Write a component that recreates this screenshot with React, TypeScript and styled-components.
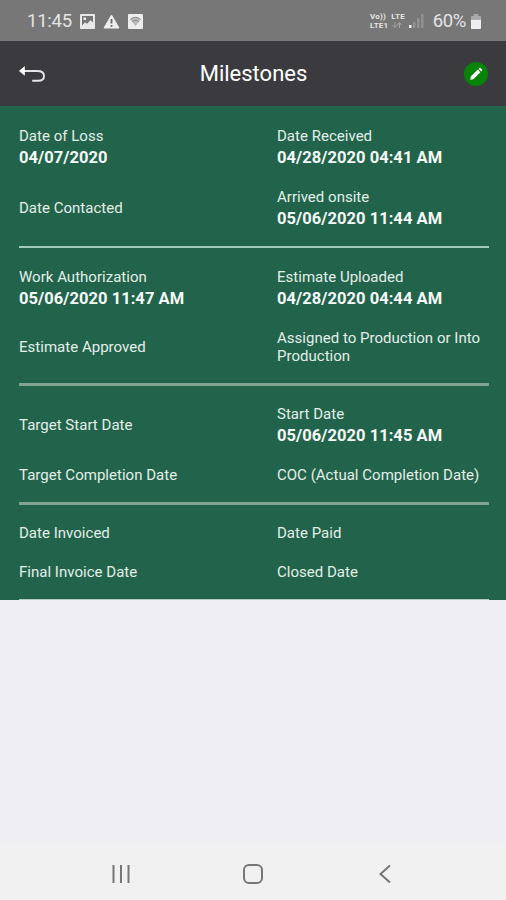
import React from "react";
import styled, { createGlobalStyle } from "styled-components";

const GlobalStyle = createGlobalStyle`
  *, *::before, *::after { box-sizing: border-box; }
  html, body { margin: 0; padding: 0; }
  body { font-family: Roboto, "Liberation Sans", sans-serif; background: #efeff4; }
`;

const Screen = styled.div`
  display: flex;
  flex-direction: column;
  width: 100%;
  height: 100vh;
  min-height: 900px;
  background: #efeef4;
`;

const StatusBar = styled.div`
  display: flex;
  align-items: center;
  justify-content: space-between;
  flex: none;
  height: 41px;
  padding: 1px 25px 0 27px;
  background: #777777;
  color: #e4e4e4;
`;

const StatusGroup = styled.div<{ $gap: number }>`
  display: flex;
  align-items: center;
  gap: ${(p) => p.$gap}px;
`;

const StatusText = styled.span<{ $spacing?: number }>`
  font-size: 18.5px;
  line-height: 24px;
  letter-spacing: ${(p) => p.$spacing ?? 0}px;
`;

const NetworkLabels = styled.div`
  display: flex;
  gap: 3px;
  margin-right: -1px;
`;

const NetworkLabel = styled.div`
  display: flex;
  flex-direction: column;
  font-size: 8px;
  font-weight: 700;
  line-height: 9px;
  letter-spacing: 0.2px;
`;

const SignalSlot = styled.div`
  display: flex;
  margin-right: 4px;
`;

const Header = styled.header`
  display: grid;
  grid-template-columns: 30px 1fr 30px;
  align-items: center;
  flex: none;
  height: 65px;
  padding: 0 15px 0 17px;
  background: #3b3b3f;
`;

const Title = styled.h1`
  margin: 0;
  padding-right: 1px;
  color: #fff;
  font-size: 22px;
  font-weight: 400;
  line-height: 28px;
  text-align: center;
`;

const IconButton = styled.button`
  display: flex;
  align-items: center;
  justify-content: center;
  width: 30px;
  height: 30px;
  padding: 0;
  border: 0;
  background: transparent;
`;

const Panel = styled.main`
  flex: none;
  height: 494px;
  padding: 21px 17px 0 19px;
  background: #22644b;
  overflow: hidden;
`;

const Section = styled.section<{ $line: string; $thickness: number }>`
  display: grid;
  row-gap: 21px;
  padding-bottom: 18px;
  margin-bottom: ${(p) => 22 - p.$thickness}px;
  border-bottom: ${(p) => p.$thickness}px solid ${(p) => p.$line};
`;

const Row = styled.div`
  display: grid;
  grid-template-columns: 258px 1fr;
  align-items: center;
`;

const Label = styled.div`
  color: #e3eee9;
  font-size: 15px;
  line-height: 18px;
  letter-spacing: 0.02px;
`;

const Value = styled.div`
  padding-top: 3px;
  color: #f6faf8;
  font-size: 16.5px;
  font-weight: 700;
  line-height: 19px;
  letter-spacing: 0.05px;
`;

const Filler = styled.div`
  flex: 1;
`;

const NavBar = styled.nav`
  display: flex;
  align-items: center;
  justify-content: space-between;
  flex: none;
  height: 57px;
  padding: 4px 106px 0;
  background: #f1f1f1;
`;

type Item = { label: string; value?: string };
type Group = { line: string; thickness: number; rows: [Item, Item][] };

const groups: Group[] = [
  {
    line: "#a2cab9",
    thickness: 2,
    rows: [
      [{ label: "Date of Loss", value: "04/07/2020" }, { label: "Date Received", value: "04/28/2020 04:41 AM" }],
      [{ label: "Date Contacted" }, { label: "Arrived onsite", value: "05/06/2020 11:44 AM" }],
    ],
  },
  {
    line: "#80a392",
    thickness: 3,
    rows: [
      [{ label: "Work Authorization", value: "05/06/2020 11:47 AM" }, { label: "Estimate Uploaded", value: "04/28/2020 04:44 AM" }],
      [{ label: "Estimate Approved" }, { label: "Assigned to Production or Into Production" }],
    ],
  },
  {
    line: "#80a392",
    thickness: 3,
    rows: [
      [{ label: "Target Start Date" }, { label: "Start Date", value: "05/06/2020 11:45 AM" }],
      [{ label: "Target Completion Date" }, { label: "COC (Actual Completion Date)" }],
    ],
  },
  {
    line: "#b4c8c0",
    thickness: 2,
    rows: [
      [{ label: "Date Invoiced" }, { label: "Date Paid" }],
      [{ label: "Final Invoice Date" }, { label: "Closed Date" }],
    ],
  },
];

const Milestone = ({ label, value }: Item) => (
  <div>
    <Label>{label}</Label>
    {value && <Value>{value}</Value>}
  </div>
);

const PictureIcon = () => (
  <svg width="15" height="15" viewBox="0 0 15 15">
    <path fill="#e9e9e9" fillRule="evenodd" d="M1 0h13a1 1 0 0 1 1 1v13a1 1 0 0 1-1 1H1a1 1 0 0 1-1-1V1a1 1 0 0 1 1-1zM2 2v9.500l3-3.300 2 1.600 3.500-3.600L13 8.500V2zM3.500 3.500h2.500v2.500H3.500z" />
  </svg>
);

const WarningIcon = () => (
  <svg width="17" height="15" viewBox="0 0 17 15">
    <path d="M8.500 1 16 14H1z" fill="#ededed" stroke="#ededed" strokeLinejoin="round" />
    <path d="M8.500 5v4.500M8.500 11v1.800" stroke="#666" strokeWidth="1.800" />
  </svg>
);

const WifiCardIcon = () => (
  <svg width="15" height="15" viewBox="0 0 16 15" preserveAspectRatio="none">
    <rect width="16" height="15" rx="1" fill="#ededed" />
    <path d="M2.500 5.500Q8 1 13.500 5.500L8 12z" fill="#bbb" />
    <path d="M2.500 5.500Q8 1 13.500 5.500M4.500 7.500Q8 5 11.500 7.500" fill="none" stroke="#888" />
  </svg>
);

const DataArrowsIcon = () => (
  <svg width="12" height="8" viewBox="0 0 12 8">
    <path d="M4 1v5M1.500 4 4 6.500 6.500 4M8.500 7V2M6.500 4l2-2.500 2 2.500" fill="none" stroke="#a6a6a6" />
  </svg>
);

const SignalIcon = () => (
  <svg width="15" height="14" viewBox="0 0 15 14">
    <rect x="0" y="11" width="2.500" height="3" fill="#eee" />
    <rect x="4" y="8" width="2.500" height="6" fill="#929292" />
    <rect x="8" y="4" width="2.500" height="10" fill="#929292" />
    <rect x="12" y="0" width="2.500" height="14" fill="#929292" />
  </svg>
);

const BatteryIcon = () => (
  <svg width="10" height="15" viewBox="0 0 11 16" preserveAspectRatio="none">
    <path d="M3 0h5v2h2a1 1 0 0 1 1 1v3H0V3a1 1 0 0 1 1-1h2z" fill="#aaa" />
    <path d="M0 6h11v9a1 1 0 0 1-1 1H1a1 1 0 0 1-1-1z" fill="#eee" />
  </svg>
);

const BackIcon = () => (
  <svg width="30" height="30" viewBox="0 0 30 30">
    <path d="M7 12h13.200c4.300 0 6.800 2 6.800 4.900s-2.300 4.800-5.800 4.800h-6" fill="none" stroke="#e6e6e6" strokeWidth="1.900" />
    <path d="M2 11.900 7.800 7v9.800z" fill="#fff" />
  </svg>
);

const EditIcon = () => (
  <svg width="26" height="26" viewBox="0 0 26 26">
    <circle cx="13" cy="13" r="12" fill="#078307" />
    <path d="M7.300 18.700 7.800 15.600 14.800 8.600l2.600 2.600-7 7z" fill="#fff" />
    <path d="m15.600 7.900.9-.9q.5-.4 1 0l1.500 1.500q.4.500 0 1l-.9.900z" fill="#fff" />
  </svg>
);

const RecentsIcon = () => (
  <svg width="30" height="24" viewBox="0 0 30 24">
    <path d="M7.500 3v18M15 3v18M22.500 3v18" stroke="#777" strokeWidth="2" />
  </svg>
);

const HomeIcon = () => (
  <svg width="30" height="24" viewBox="0 0 30 24">
    <rect x="6" y="3" width="18" height="18" rx="5" fill="none" stroke="#777" strokeWidth="2" />
  </svg>
);

const ChevronIcon = () => (
  <svg width="30" height="24" viewBox="0 0 30 24">
    <path d="m20 3.500-9.500 8.500 9.500 8.500" fill="none" stroke="#777" strokeWidth="2" />
  </svg>
);

export default function App() {
  return (
    <Screen>
      <GlobalStyle />
      <StatusBar>
        <StatusGroup $gap={8}>
          <StatusText $spacing={-0.25}>11:45</StatusText>
          <PictureIcon />
          <WarningIcon />
          <WifiCardIcon />
        </StatusGroup>
        <StatusGroup $gap={5}>
          <NetworkLabels>
            <NetworkLabel>
              <span>Vo))</span>
              <span>LTE1</span>
            </NetworkLabel>
            <NetworkLabel>
              <span>LTE</span>
              <DataArrowsIcon />
            </NetworkLabel>
          </NetworkLabels>
          <SignalSlot><SignalIcon /></SignalSlot>
          <StatusText $spacing={-0.4}>60%</StatusText>
          <BatteryIcon />
        </StatusGroup>
      </StatusBar>
      <Header>
        <IconButton aria-label="Back"><BackIcon /></IconButton>
        <Title>Milestones</Title>
        <IconButton aria-label="Edit"><EditIcon /></IconButton>
      </Header>
      <Panel>
        {groups.map((group, i) => (
          <Section key={i} $line={group.line} $thickness={group.thickness}>
            {group.rows.map(([left, right]) => (
              <Row key={left.label}>
                <Milestone {...left} />
                <Milestone {...right} />
              </Row>
            ))}
          </Section>
        ))}
      </Panel>
      <Filler />
      <NavBar>
        <RecentsIcon />
        <HomeIcon />
        <ChevronIcon />
      </NavBar>
    </Screen>
  );
}
